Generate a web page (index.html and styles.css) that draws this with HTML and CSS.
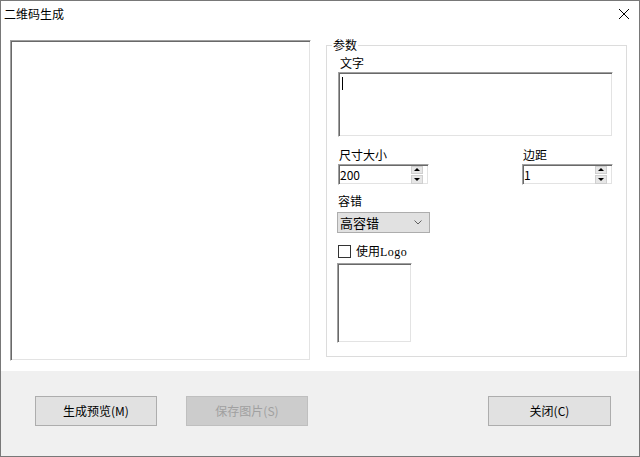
FILE: index.html
```html
<!DOCTYPE html>
<html lang="zh-CN">

<head>
    <meta charset="UTF-8">
    <meta name="viewport" content="width=device-width, initial-scale=1.0">
    <title>二维码生成</title>
    <link rel="stylesheet" href="styles.css">
</head>

<body>
    <div class="window">
        <div class="titlebar">
            <span class="title">二维码生成</span>
            <svg class="close" width="12" height="12" viewBox="0 0 12 12">
                <path d="M1 1L11 11M11 1L1 11" stroke="#000" stroke-width="1" fill="none" />
            </svg>
        </div>

        <div class="main">
            <div class="preview sunken"></div>

            <fieldset class="params">
                <legend>参数</legend>
                <div class="label label-text">文字</div>
                <div class="textbox sunken"><span class="caret"></span></div>

                <div class="row">
                    <div class="field">
                        <div class="label">尺寸大小</div>
                        <div class="spin sunken">
                            <span class="value">200</span>
                            <div class="spin-btns">
                                <span class="up"></span>
                                <span class="down"></span>
                            </div>
                        </div>
                    </div>
                    <div class="field">
                        <div class="label">边距</div>
                        <div class="spin sunken">
                            <span class="value">1</span>
                            <div class="spin-btns">
                                <span class="up"></span>
                                <span class="down"></span>
                            </div>
                        </div>
                    </div>
                </div>

                <div class="label label-level">容错</div>
                <div class="combo">
                    <span>高容错</span>
                    <svg width="8" height="5" viewBox="0 0 8 5">
                        <path d="M0.5 0.5L4 4L7.5 0.5" stroke="#606060" stroke-width="1" fill="none" />
                    </svg>
                </div>

                <div class="check">
                    <span class="box"></span>
                    <span class="check-text">使用<span class="latin">Logo</span></span>
                </div>
                <div class="logo sunken"></div>
            </fieldset>
        </div>

        <div class="footer">
            <div class="btn">生成预览(M)</div>
            <div class="btn disabled">保存图片(S)</div>
            <div class="btn btn-close">关闭(C)</div>
        </div>
    </div>
</body>

</html>
```

FILE: styles.css
```css
* {
    box-sizing: border-box;
}

body {
    margin: 0;
    font-family: "Noto Sans CJK SC", "Liberation Sans", sans-serif;
    font-size: 12px;
    color: #000;
}

.window {
    width: 640px;
    height: 457px;
    border: 1px solid #787878;
    background: #fff;
    display: flex;
    flex-direction: column;
}

.titlebar {
    height: 26px;
    padding: 0 9px 0 3px;
    display: flex;
    align-items: center;
    justify-content: space-between;
}

.title {
    font-size: 12px;
    line-height: 16px;
}

/* 오목한 테두리 */
.sunken {
    background: #fff;
    border: 1px solid;
    border-color: #a0a0a0 #fff #fff #a0a0a0;
    box-shadow: inset 1px 1px 0 #696969, inset -1px -1px 0 #e3e3e3;
}

.main {
    height: 344px;
    padding: 10px 0 0 9px;
    display: flex;
    align-items: flex-start;
    gap: 15px;
}

.preview {
    margin-top: 3px;
    width: 301px;
    height: 321px;
}

.params {
    width: 301px;
    margin: 0;
    padding: 0 12px 13px 11px;
    border: 1px solid #dcdcdc;
}

.params legend {
    margin-left: -6px;
    padding: 0 1px;
    line-height: 16px;
}

.label {
    line-height: 16px;
    padding-left: 1px;
}

.label-text {
    margin-top: 2px;
    padding-left: 2px;
}

.textbox {
    margin-top: 1px;
    width: 275px;
    height: 65px;
    padding: 4px 0 0 3px;
}

.caret {
    display: block;
    width: 1px;
    height: 13px;
    background: #000;
}

.row {
    margin-top: 10px;
    display: grid;
    grid-template-columns: 184px 1fr;
}

.spin {
    margin-top: 1px;
    width: 91px;
    height: 21px;
    padding: 0 5px 0 1px;
    display: flex;
    align-items: center;
    justify-content: space-between;
}

.spin .value {
    line-height: 16px;
}

.spin-btns {
    width: 12px;
    height: 18px;
    display: flex;
    flex-direction: column;
    gap: 1px;
}

.spin-btns span {
    flex: 1;
    background: #e6e6e6;
    border: 1px solid #cfcfcf;
    display: flex;
    align-items: center;
    justify-content: center;
}

.spin-btns .up::after {
    content: "";
    border-left: 3px solid transparent;
    border-right: 3px solid transparent;
    border-bottom: 3px solid #000;
}

.spin-btns .down::after {
    content: "";
    border-left: 3px solid transparent;
    border-right: 3px solid transparent;
    border-top: 3px solid #000;
}

.label-level {
    margin-top: 8px;
    padding-left: 0;
}

.combo {
    margin-top: 3px;
    margin-left: -1px;
    width: 93px;
    height: 21px;
    padding: 0 7px 0 2px;
    background: #e1e1e1;
    border: 1px solid #adadad;
    display: flex;
    align-items: center;
    justify-content: space-between;
}

.combo span {
    font-size: 13px;
    line-height: 16px;
}

.check {
    margin-top: 11px;
    height: 14px;
    display: flex;
    align-items: center;
    gap: 5px;
}

.check .box {
    width: 13px;
    height: 13px;
    border: 1px solid #333;
    background: #fff;
}

.check-text {
    line-height: 14px;
}

.latin {
    font-family: "Liberation Serif", serif;
    font-size: 12px;
    letter-spacing: 0.5px;
}

.logo {
    margin-top: 5px;
    margin-left: -1px;
    width: 75px;
    height: 80px;
}

.footer {
    flex: 1;
    background: #f0f0f0;
    padding: 25px 28px 0 34px;
    display: flex;
    align-items: flex-start;
    gap: 29px;
}

.btn {
    width: 122px;
    height: 30px;
    background: #e1e1e1;
    border: 1px solid #adadad;
    display: flex;
    align-items: center;
    justify-content: center;
    line-height: 16px;
}

.btn.disabled {
    background: #cccccc;
    border-color: #bfbfbf;
    color: #a0a0a0;
}

.btn-close {
    margin-left: auto;
    width: 123px;
}
```
